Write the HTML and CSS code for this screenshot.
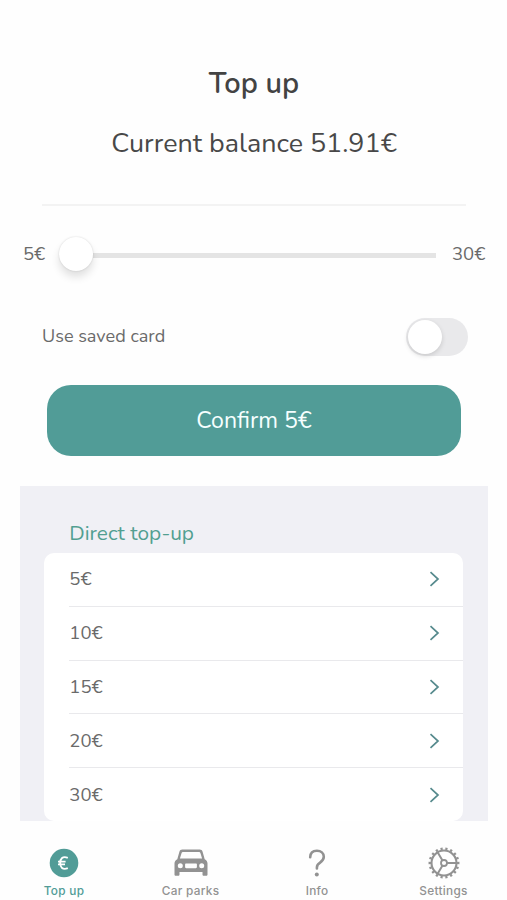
FILE: index.html
```
<!DOCTYPE html>
<html lang="en">
<head>
<meta charset="utf-8">
<title>Top up</title>
<link rel="stylesheet" href="styles.css">
</head>
<body>
<main class="screen">
  <header class="header">
    <h1 class="title">Top up</h1>
    <p class="balance">Current balance 51.91€</p>
  </header>
  <section class="amount">
    <span class="text amount-min">5€</span>
    <div class="slider"><span class="thumb"></span><span class="track"></span></div>
    <span class="text amount-max">30€</span>
  </section>
  <section class="saved">
    <span class="text saved-label">Use saved card</span>
    <span class="switch" role="switch" aria-checked="false"><span class="switch-knob"></span></span>
  </section>
  <button class="confirm"><span>Confirm 5€</span></button>
  <section class="direct">
    <h2 class="direct-title">Direct top-up</h2>
    <ul class="list">
      <li class="row"><span class="text">5€</span><svg class="chevron" viewBox="0 0 12 16"><path d="M1.500 1.200 9 8 1.500 14.800"/></svg></li>
      <li class="row"><span class="text">10€</span><svg class="chevron" viewBox="0 0 12 16"><path d="M1.500 1.200 9 8 1.500 14.800"/></svg></li>
      <li class="row"><span class="text">15€</span><svg class="chevron" viewBox="0 0 12 16"><path d="M1.500 1.200 9 8 1.500 14.800"/></svg></li>
      <li class="row"><span class="text">20€</span><svg class="chevron" viewBox="0 0 12 16"><path d="M1.500 1.200 9 8 1.500 14.800"/></svg></li>
      <li class="row"><span class="text">30€</span><svg class="chevron" viewBox="0 0 12 16"><path d="M1.500 1.200 9 8 1.500 14.800"/></svg></li>
    </ul>
  </section>
  <nav class="tabs">
    <a class="tab active">
      <svg class="icon" viewBox="0 0 36 36"><circle cx="18" cy="18" r="14.300" fill="currentColor"/><path d="M21.800 12.900c-5.200-2.200-7.600 1-7.600 5.100s2.400 7.300 7.600 5.100M12 16.600h7.600M12 19.400h7" fill="none" stroke="#fff" stroke-width="1.900"/></svg>
      <span class="tab-label">Top up</span>
    </a>
    <a class="tab">
      <svg class="icon" viewBox="0 0 36 36"><path fill="currentColor" fill-rule="evenodd" d="M9.300 4.600h17.400c1.500 0 2.500.8 2.900 2.200l2.100 7.500c1.800 1 2.800 2.300 2.800 4.300v10.900c0 .8-.5 1.300-1.300 1.300h-2.400c-.8 0-1.300-.5-1.300-1.300v-2.600h-23v2.600c0 .8-.5 1.300-1.300 1.300H2.800c-.8 0-1.300-.5-1.300-1.300V18.600c0-2 1-3.300 2.800-4.300l2.100-7.500c.4-1.400 1.400-2.200 2.900-2.200Zm.6 2.400c-.7 0-1.100.3-1.300 1l-1.700 5.500h22.200L27.400 8c-.2-.7-.6-1-1.300-1H9.900ZM7.300 18.200a2.500 2.500 0 1 0 0 5 2.500 2.500 0 0 0 0-5Zm21.400 0a2.500 2.500 0 1 0 0 5 2.500 2.500 0 0 0 0-5ZM13.200 18.400c-.7 0-1.100.4-1.100 1v2.700c0 .7.400 1.100 1.100 1.100h9.600c.7 0 1.100-.4 1.100-1.100v-2.700c0-.6-.4-1-1.100-1h-9.600Z"/></svg>
      <span class="tab-label">Car parks</span>
    </a>
    <a class="tab">
      <svg class="icon" viewBox="0 0 36 36"><path d="M11.200 12.200c.1-4.300 2.700-6.500 6.700-6.500 4.100 0 6.900 2.400 6.900 6.100 0 3-1.700 4.500-4 6-2.200 1.400-2.900 2.500-2.900 4.600v1" fill="none" stroke="currentColor" stroke-width="2.600" stroke-linecap="round"/><circle cx="17.800" cy="29.400" r="2" fill="currentColor"/></svg>
      <span class="tab-label">Info</span>
    </a>
    <a class="tab">
      <svg class="icon" viewBox="0 0 36 36" fill="none" stroke="currentColor"><circle cx="18" cy="18" r="12.500" stroke-width="2.100"/><circle cx="18" cy="18" r="14.200" pathLength="180" stroke-width="2.500" stroke-dasharray="4.400 5.600" stroke-dashoffset="2.200"/><circle cx="18" cy="18" r="3" stroke-width="1.800"/><path d="M21 18h10M16.500 15.400 11.600 7.200M16.500 20.600l-4.900 8.200" stroke-width="2"/></svg>
      <span class="tab-label">Settings</span>
    </a>
  </nav>
</main>
</body>
</html>
```
FILE: styles.css
```
* { box-sizing: border-box; }
body { margin: 0; background: #fefefe; font-family: Nunito, Lato, sans-serif; color: #484848; }
h1, h2, p, ul { margin: 0; padding: 0; font-weight: 400; }
.screen { width: 507px; height: 900px; display: flex; flex-direction: column; overflow: hidden; }
.header { height: 206px; margin: 0 41px 0 42px; padding-top: 64px; border-bottom: 2px solid #f3f3f3; text-align: center; }
.title { font-size: 29px; line-height: 40px; font-weight: 600; color: #434343; }
.balance { margin-top: 19px; font-size: 26.900px; line-height: 40px; white-space: nowrap; }
.text { font-size: 18.500px; line-height: 26px; color: #6a6a6a; }
.amount { height: 96px; display: flex; align-items: center; padding: 0 20px 0 23px; }
.amount-min { width: 36px; }
.amount-max { margin-left: 16px; }
.slider { width: 377px; display: flex; align-items: center; }
.thumb { width: 34px; height: 34px; flex: none; border-radius: 50%; background: #fff; box-shadow: 0 0 2px rgba(0,0,0,.15), 0 6px 9px rgba(0,0,0,.12); z-index: 1; }
.track { flex: 1; height: 5px; margin-top: 3px; background: #e4e4e4; }
.saved { height: 83px; display: flex; align-items: center; justify-content: space-between; padding: 0 39px 15px 42px; }
.saved-label { font-size: 18.100px; }
.switch { width: 62px; height: 38px; margin-top: 1px; padding: 2px; border-radius: 19px; background: #e9e9eb; }
.switch-knob { display: block; width: 34px; height: 34px; border-radius: 50%; background: #fff; box-shadow: 0 2px 5px rgba(0,0,0,.14); }
.confirm { width: 414px; height: 71px; flex: none; margin-left: 47px; padding: 0; border: 0; border-radius: 24px; background: #519c97; color: #f6ffff; font: 23.100px/71px Nunito, Lato, sans-serif; }
.direct { width: 467.400px; height: 335px; flex: none; margin: 30px 0 0 20.300px; padding: 31px 24.300px 0 24px; background: #f0f0f5; }
.direct-title { height: 36px; padding-left: 25px; font-size: 20.800px; line-height: 32px; color: #529f91; }
.list { list-style: none; height: 268px; border-radius: 10px; background: #fff; }
.row { height: 53.800px; margin-left: 25px; padding-right: 22px; display: flex; align-items: center; justify-content: space-between; border-bottom: 1px solid #e9e9ec; }
.row:last-child { border-bottom: 0; }
.chevron { width: 12px; height: 16px; fill: none; stroke: #568a8d; stroke-width: 1.700; }
.tabs { flex: 1; display: grid; grid-template-columns: repeat(4, 126.500px); padding: 24px 0 0 .8px; }
.tab { display: flex; flex-direction: column; align-items: center; color: #929292; }
.tab.active { color: #519c97; }
.icon { width: 36px; height: 36px; }
.tab-label { font: 500 11.800px/14px Inter, sans-serif; letter-spacing: .3px; margin-top: 3px; }
```
